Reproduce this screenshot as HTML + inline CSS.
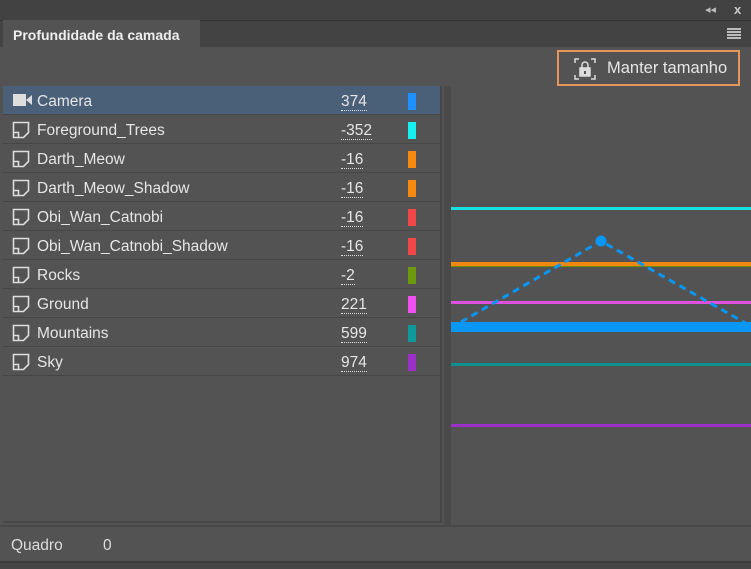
<!DOCTYPE html>
<html><head><style>
*{margin:0;padding:0;box-sizing:border-box}
body{width:751px;height:569px;background:#535353;position:relative;overflow:hidden;font-family:"Liberation Sans",sans-serif;color:#e6e6e6}
.top{position:absolute;left:0;top:0;width:751px;height:20px;background:#424242}
.tabbar{position:absolute;left:0;top:20px;width:751px;height:27px;background:#434343;border-top:1px solid #333}
.tab{position:absolute;left:3px;top:20px;width:197px;height:27px;background:#535353;font-size:14px;font-weight:bold;padding:7px 0 0 10px;color:#eee}
.btn{position:absolute;left:557px;top:50px;width:183px;height:36px;border:2px solid #e8945a;font-size:16.5px;padding:7px 0 0 48px}
.list{position:absolute;left:3px;top:86px;width:439px;height:437px;background:#535353;border-right:2px solid #474747;border-bottom:2px solid #474747}
.row{position:absolute;left:0;width:437px;height:29px;border-bottom:1px solid #464646;font-size:15.5px}
.row .n{position:absolute;left:34px;top:7px}
.row .v{position:absolute;left:338px;top:7px;border-bottom:1px dotted #ddd;line-height:17px}
.row .c{position:absolute;left:405px;top:7px;width:8px;height:17px}
.row svg{position:absolute;left:9px;top:6px}
.sel{background:#4a5f78}
.foot{position:absolute;left:0;top:525px;width:751px;height:36px;border-top:2px solid #484848;font-size:15.5px;color:#ddd}
.bot{position:absolute;left:0;top:561px;width:751px;height:8px;background:#464646;border-top:2px solid #3c3c3c}
</style></head><body>
<div class="top"><span style="position:absolute;left:705px;top:3px;font-size:11px;color:#bbb">◂◂</span><span style="position:absolute;left:734px;top:2px;font-size:13px;font-weight:bold;color:#ccc">x</span></div>
<div class="tabbar"><div style="position:absolute;left:727px;top:7px;width:14px;height:2px;background:#bbb;box-shadow:0 3px #bbb,0 6px #bbb,0 9px #bbb"></div></div>
<div class="tab">Profundidade da camada</div>
<div class="btn"><svg style="position:absolute;left:15px;top:6px" width="22" height="22" viewBox="0 0 22 22" fill="none" stroke="#ddd" stroke-width="1.5"><path d="M1 5V1h4M17 1h4v4M21 17v4h-4M5 21H1v-4"/><rect x="6" y="10" width="10" height="8" fill="#ddd"/><path d="M8 10V7a3 3 0 0 1 6 0v3"/><rect x="10" y="13" width="2" height="3" fill="#535353" stroke="none"/></svg>Manter tamanho</div>
<div class="list">
<div class="row sel" style="top:0"><svg width="22" height="16"><rect x="1" y="2" width="13" height="12" fill="#ddd"/><path d="M14 8l6-5v10z" fill="#ddd"/></svg><span class="n">Camera</span><span class="v">374</span><span class="c" style="background:#1e90ff"></span></div>
<div class="row" style="top:29px"><svg width="20" height="18"><path d="M1.5 1.5h15v10l-5 5h-10z M1.5 11.5h5v5" fill="none" stroke="#ddd" stroke-width="1.6"/></svg><span class="n">Foreground_Trees</span><span class="v">-352</span><span class="c" style="background:#17f0f0"></span></div>
<div class="row" style="top:58px"><svg width="20" height="18"><path d="M1.5 1.5h15v10l-5 5h-10z M1.5 11.5h5v5" fill="none" stroke="#ddd" stroke-width="1.6"/></svg><span class="n">Darth_Meow</span><span class="v">-16</span><span class="c" style="background:#f58a0f"></span></div>
<div class="row" style="top:87px"><svg width="20" height="18"><path d="M1.5 1.5h15v10l-5 5h-10z M1.5 11.5h5v5" fill="none" stroke="#ddd" stroke-width="1.6"/></svg><span class="n">Darth_Meow_Shadow</span><span class="v">-16</span><span class="c" style="background:#f58a0f"></span></div>
<div class="row" style="top:116px"><svg width="20" height="18"><path d="M1.5 1.5h15v10l-5 5h-10z M1.5 11.5h5v5" fill="none" stroke="#ddd" stroke-width="1.6"/></svg><span class="n">Obi_Wan_Catnobi</span><span class="v">-16</span><span class="c" style="background:#f04848"></span></div>
<div class="row" style="top:145px"><svg width="20" height="18"><path d="M1.5 1.5h15v10l-5 5h-10z M1.5 11.5h5v5" fill="none" stroke="#ddd" stroke-width="1.6"/></svg><span class="n">Obi_Wan_Catnobi_Shadow</span><span class="v">-16</span><span class="c" style="background:#f04848"></span></div>
<div class="row" style="top:174px"><svg width="20" height="18"><path d="M1.5 1.5h15v10l-5 5h-10z M1.5 11.5h5v5" fill="none" stroke="#ddd" stroke-width="1.6"/></svg><span class="n">Rocks</span><span class="v">-2</span><span class="c" style="background:#6c9a0c"></span></div>
<div class="row" style="top:203px"><svg width="20" height="18"><path d="M1.5 1.5h15v10l-5 5h-10z M1.5 11.5h5v5" fill="none" stroke="#ddd" stroke-width="1.6"/></svg><span class="n">Ground</span><span class="v">221</span><span class="c" style="background:#f050f0"></span></div>
<div class="row" style="top:232px"><svg width="20" height="18"><path d="M1.5 1.5h15v10l-5 5h-10z M1.5 11.5h5v5" fill="none" stroke="#ddd" stroke-width="1.6"/></svg><span class="n">Mountains</span><span class="v">599</span><span class="c" style="background:#0e9a9a"></span></div>
<div class="row" style="top:261px"><svg width="20" height="18"><path d="M1.5 1.5h15v10l-5 5h-10z M1.5 11.5h5v5" fill="none" stroke="#ddd" stroke-width="1.6"/></svg><span class="n">Sky</span><span class="v">974</span><span class="c" style="background:#9a30c8"></span></div>
</div>
<div style="position:absolute;left:444px;top:86px;width:7px;height:439px;background:#4a4a4a"></div>
<svg style="position:absolute;left:451px;top:87px" width="300" height="435">
<rect x="0" y="120" width="300" height="3" fill="#17e0e0"/>
<rect x="0" y="175" width="300" height="4" fill="#f0880f"/>
<rect x="0" y="179" width="300" height="1" fill="#6c8a0c"/>
<rect x="0" y="214" width="300" height="3" fill="#e050e0"/>
<rect x="0" y="235" width="300" height="10" fill="#0a96f5"/>
<rect x="0" y="276" width="300" height="3" fill="#0e9090"/>
<rect x="0" y="337" width="300" height="3" fill="#9a30c8"/>
<path d="M10 235L150 154L296 237" fill="none" stroke="#0a96f5" stroke-width="3" stroke-dasharray="7 5"/>
<circle cx="150" cy="154" r="5.5" fill="#0a96f5"/>
</svg>
<div class="foot"><span style="position:absolute;left:11px;top:10px">Quadro</span><span style="position:absolute;left:103px;top:10px">0</span></div>
<div class="bot"></div>
</body></html>
